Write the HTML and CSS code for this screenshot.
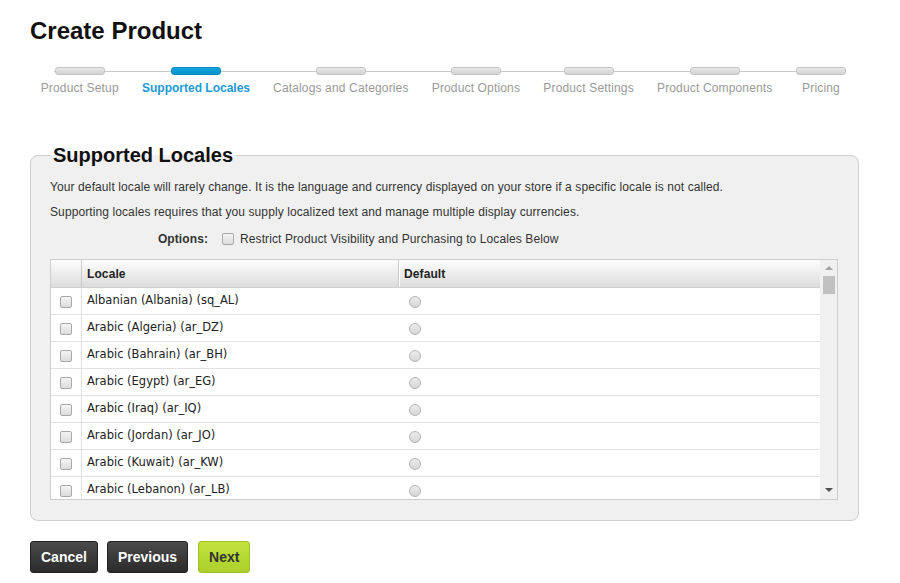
FILE: index.html
```html
<!DOCTYPE html>
<html>
<head>
<meta charset="utf-8">
<link rel="stylesheet" href="styles.css">
</head>
<body>
<div class="page">
  <h1 class="title">Create Product</h1>
  <div class="stepper">
    <div class="step"><span class="bar"></span><span class="label">Product Setup</span></div>
    <div class="step active"><span class="bar"></span><span class="label">Supported Locales</span></div>
    <div class="step"><span class="bar"></span><span class="label">Catalogs and Categories</span></div>
    <div class="step"><span class="bar"></span><span class="label">Product Options</span></div>
    <div class="step"><span class="bar"></span><span class="label">Product Settings</span></div>
    <div class="step"><span class="bar"></span><span class="label">Product Components</span></div>
    <div class="step"><span class="bar"></span><span class="label">Pricing</span></div>
  </div>

  <fieldset class="panel">
    <legend class="legend">Supported Locales</legend>
    <p class="info first">Your default locale will rarely change. It is the language and currency displayed on your store if a specific locale is not called.</p>
    <p class="info">Supporting locales requires that you supply localized text and manage multiple display currencies.</p>
    <div class="options">
      <span class="opt-label">Options:</span>
      <label class="opt-check"><input type="checkbox" class="cb"> Restrict Product Visibility and Purchasing to Locales Below</label>
    </div>
    <div class="grid">
      <div class="grid-main">
        <div class="row head">
          <div class="c-check"></div>
          <div class="c-locale">Locale</div>
          <div class="c-default">Default</div>
        </div>
        <div class="body">
          <div class="row"><div class="c-check"><input type="checkbox" class="cb"></div><div class="c-locale">Albanian (Albania) (sq_AL)</div><div class="c-default"><input type="radio" name="d" class="rd"></div></div>
          <div class="row"><div class="c-check"><input type="checkbox" class="cb"></div><div class="c-locale">Arabic (Algeria) (ar_DZ)</div><div class="c-default"><input type="radio" name="d" class="rd"></div></div>
          <div class="row"><div class="c-check"><input type="checkbox" class="cb"></div><div class="c-locale">Arabic (Bahrain) (ar_BH)</div><div class="c-default"><input type="radio" name="d" class="rd"></div></div>
          <div class="row"><div class="c-check"><input type="checkbox" class="cb"></div><div class="c-locale">Arabic (Egypt) (ar_EG)</div><div class="c-default"><input type="radio" name="d" class="rd"></div></div>
          <div class="row"><div class="c-check"><input type="checkbox" class="cb"></div><div class="c-locale">Arabic (Iraq) (ar_IQ)</div><div class="c-default"><input type="radio" name="d" class="rd"></div></div>
          <div class="row"><div class="c-check"><input type="checkbox" class="cb"></div><div class="c-locale">Arabic (Jordan) (ar_JO)</div><div class="c-default"><input type="radio" name="d" class="rd"></div></div>
          <div class="row"><div class="c-check"><input type="checkbox" class="cb"></div><div class="c-locale">Arabic (Kuwait) (ar_KW)</div><div class="c-default"><input type="radio" name="d" class="rd"></div></div>
          <div class="row"><div class="c-check"><input type="checkbox" class="cb"></div><div class="c-locale">Arabic (Lebanon) (ar_LB)</div><div class="c-default"><input type="radio" name="d" class="rd"></div></div>
        </div>
      </div>
      <div class="scrollbar">
        <span class="arrow up"></span>
        <span class="thumb"></span>
        <span class="track"></span>
        <span class="arrow down"></span>
      </div>
    </div>
  </fieldset>

  <div class="actions">
    <button class="btn dark">Cancel</button>
    <button class="btn dark">Previous</button>
    <button class="btn green">Next</button>
  </div>
</div>
</body>
</html>
```

FILE: styles.css
```css
* { box-sizing: border-box; }
html, body { margin: 0; padding: 0; background: #fff; }
body { font-family: "Liberation Sans", Arial, sans-serif; color: #333; letter-spacing: 0.1px; }

.page { padding: 16px 0 0 30px; width: 900px; }

.title {
  margin: 0;
  font-size: 24px;
  line-height: 30px;
  font-weight: bold;
  color: #111;
  letter-spacing: 0;
}

.stepper {
  position: relative;
  display: flex;
  gap: 24px;
  margin: 21px 0 0 11px;
  width: 805px;
}
.stepper::before {
  content: "";
  position: absolute;
  left: 13px;
  right: 0;
  top: 4px;
  height: 1px;
  background: #c8c8c8;
}
.step {
  position: relative;
  display: flex;
  flex-direction: column;
  align-items: center;
  min-width: 50px;
}
.bar {
  display: block;
  width: 50px;
  height: 8px;
  border-radius: 3px;
  border: 1px solid #c4c4c4;
  background: linear-gradient(#e8e8e8, #d2d2d2);
}
.label {
  margin-top: 6px;
  font-size: 12px;
  line-height: 14px;
  color: #9a9a9a;
  white-space: nowrap;
  letter-spacing: 0.15px;
}
.step.active .bar {
  background: linear-gradient(#12a6de, #0890c8);
  border-color: #0a8ac0;
}
.step.active .label {
  color: #1b9ad6;
  font-weight: bold;
  letter-spacing: 0;
}

.panel {
  margin: 48px 0 0 0;
  width: 829px;
  border: 1px solid #cfcfcf;
  border-radius: 8px;
  background: #f0f0f0;
  padding: 0 19px 20px 19px;
  min-width: 0;
}
.legend {
  padding: 0 3px;
  margin-left: 0;
  font-size: 20px;
  font-weight: bold;
  color: #111;
  line-height: 24px;
  letter-spacing: 0;
}
.info {
  margin: 6px 0 0 0;
  font-size: 12px;
  line-height: 14px;
  color: #333;
}
.info.first { margin-top: 13px; }
.info + .info { margin-top: 11px; }

.options {
  display: flex;
  align-items: center;
  margin-top: 13px;
  font-size: 12px;
  line-height: 14px;
}
.opt-label {
  width: 158px;
  text-align: right;
  font-weight: bold;
  color: #333;
}
.opt-check {
  display: flex;
  align-items: center;
  gap: 6px;
  margin-left: 14px;
}

.cb {
  appearance: none;
  -webkit-appearance: none;
  margin: 0;
  width: 12px;
  height: 12px;
  border: 1px solid #a9a9a9;
  border-radius: 2px;
  background: linear-gradient(#f4f4f4, #dcdcdc);
  flex: none;
}
.rd {
  appearance: none;
  -webkit-appearance: none;
  margin: 0;
  width: 12px;
  height: 12px;
  border: 1px solid #b4b4b4;
  border-radius: 50%;
  background: linear-gradient(#ececec, #d6d6d6);
  flex: none;
}

.grid {
  display: flex;
  margin-top: 13px;
  width: 788px;
  height: 241px;
  border: 1px solid #cdcdcd;
  background: #fff;
}
.grid-main {
  flex: 1;
  display: flex;
  flex-direction: column;
  overflow: hidden;
}
.row {
  display: flex;
  height: 27px;
  border-bottom: 1px solid #e2e2e2;
  flex: none;
}
.row.head {
  height: 28px;
  border-bottom: 1px solid #d0d0d0;
  background: linear-gradient(#fdfdfd, #dcdcdc);
  font-size: 12px;
  font-weight: bold;
  color: #222;
}
.body .row { font-family: "DejaVu Sans", Verdana, sans-serif; font-size: 11.5px; color: #222; letter-spacing: 0; }
.c-check {
  width: 31px;
  border-right: 1px solid #e0e0e0;
  display: flex;
  align-items: center;
  justify-content: center;
  padding-top: 2px;
}
.head .c-check { border-right-color: #cacaca; }
.c-locale {
  width: 317px;
  padding-left: 5px;
  display: flex;
  align-items: center;
  padding-bottom: 2px;
}
.head .c-locale { border-right: 1px solid #cacaca; box-shadow: 1px 0 0 #fff; padding-left: 5px; }
.head .c-check, .head .c-locale, .head .c-default { padding-top: 0; padding-bottom: 0; }
.c-default {
  flex: 1;
  padding-left: 10px;
  display: flex;
  align-items: center;
  padding-top: 2px;
}
.head .c-default { padding-left: 5px; }

.scrollbar {
  width: 17px;
  background: #f0f0f0;
  display: flex;
  flex-direction: column;
  align-items: center;
  border-left: 1px solid #f0f0f0;
}
.arrow {
  width: 0;
  height: 0;
  border-left: 4px solid transparent;
  border-right: 4px solid transparent;
  flex: none;
}
.arrow.up { border-bottom: 4px solid #a3a3a3; margin-top: 6px; }
.arrow.down { border-top: 4px solid #505050; margin-bottom: 7px; }
.thumb {
  width: 12px;
  height: 18px;
  margin-top: 6px;
  background: #c1c1c1;
  flex: none;
}
.track { flex: 1; }

.actions {
  display: flex;
  gap: 9px;
  margin-top: 20px;
}
.btn {
  height: 32px;
  padding: 0 10px;
  border-radius: 3px;
  font-family: "Liberation Sans", Arial, sans-serif;
  font-size: 14px;
  font-weight: bold;
  cursor: pointer;
  letter-spacing: 0;
}
.btn.dark {
  color: #fff;
  border: 1px solid #222;
  background: linear-gradient(#4a4a4a, #2b2b2b);
}
.btn.green {
  margin-left: 1px;
  color: #333;
  border: 1px solid #9fbf2a;
  background: linear-gradient(#c4e23f, #abd02c);
}
```
